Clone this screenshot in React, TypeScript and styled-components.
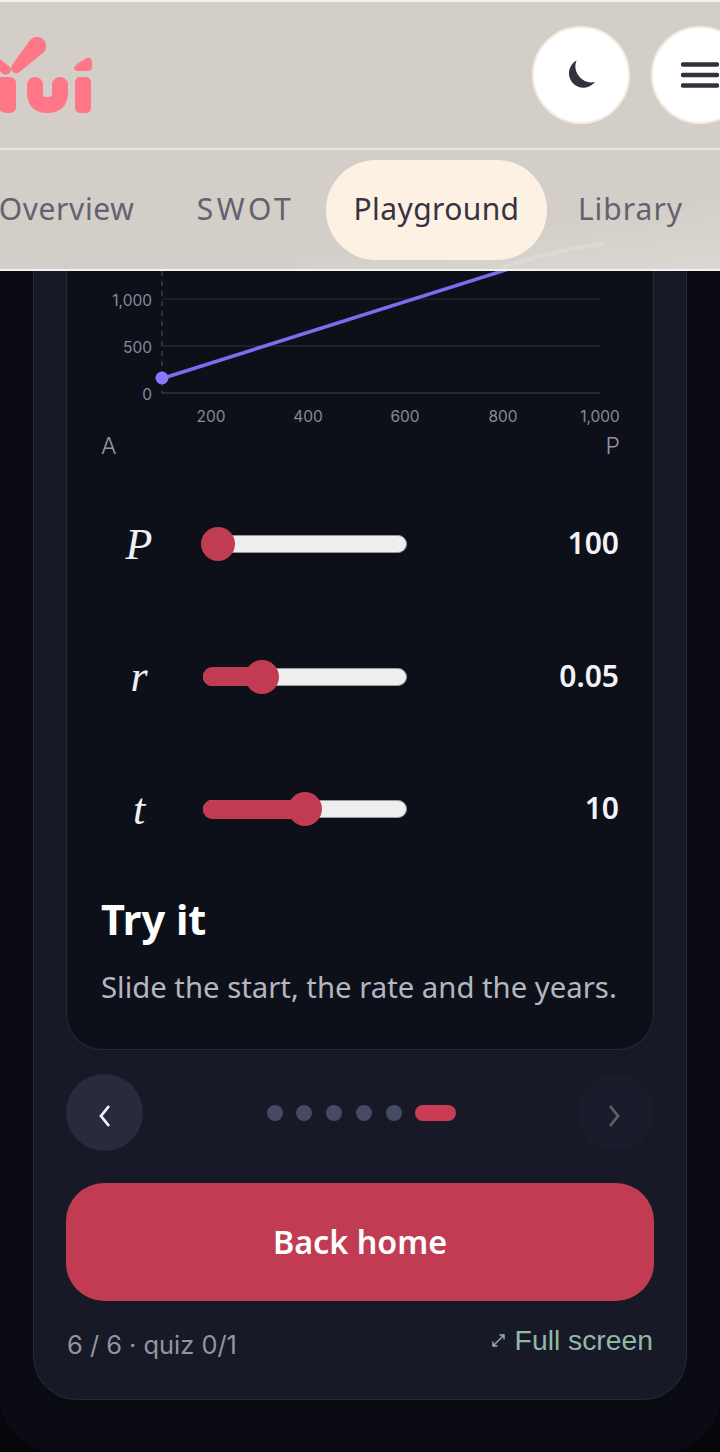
import React from "react";
import styled, { createGlobalStyle } from "styled-components";

const Global = createGlobalStyle`
  html, body { margin: 0; padding: 0; background: #07070b; }
  body { font-family: "Open Sans", "Noto Sans", sans-serif; }
  * { box-sizing: border-box; }
`;

const Page = styled.div`
  width: 720px;
  height: 1452px;
  overflow: hidden;
  position: relative;
  background: #07070b;
`;
const Shell = styled.div`
  width: 720px;
  height: 1452px;
  background: #0b0c13;
  border-radius: 0 0 56px 56px;
  display: flex;
  flex-direction: column;
`;
const Header = styled.header`
  height: 271px;
  flex: none;
  overflow: hidden;
  position: relative;
  background: linear-gradient(172deg, #d3cfc8 80%, #dbd8d1 100%);
  border-top: 2px solid #f2f0ec;
  border-bottom: 2px solid #f4f2ee;
`;
const TopBar = styled.div`
  height: 148px;
  display: flex;
  align-items: center;
  border-bottom: 2px solid #ece6d8;
`;
const Logo = styled.svg`
  width: 100px;
  height: 120px;
  flex: none;
  align-self: flex-start;
  margin-top: 26px;
`;
const Actions = styled.div`
  margin-left: auto;
  display: flex;
  gap: 21px;
  margin-right: -29px;
`;
const RoundButton = styled.div`
  width: 98px;
  height: 98px;
  flex: none;
  border-radius: 50%;
  background: #fff;
  border: 2px solid #f3ecdf;
  display: flex;
  align-items: center;
  justify-content: center;
`;
const MenuIcon = styled.svg`
  width: 38px;
  height: 26px;
  margin-left: -1px;
`;
const Tabs = styled.nav`
  height: 119px;
  display: flex;
  align-items: flex-start;
  padding-top: 10px;
  margin-left: -27px;
`;
const Tab = styled.div<{ $active?: boolean; $width: number; $spacing?: number; $inset?: number }>`
  width: ${(p) => p.$width}px;
  height: 100px;
  flex: none;
  padding: 0 0 4px ${(p) => p.$inset ?? 0}px;
  border-radius: 50px;
  display: flex;
  align-items: center;
  justify-content: center;
  font-size: 30px;
  font-family: "Noto Sans", sans-serif;
  letter-spacing: ${(p) => p.$spacing ?? 0.4}px;
  color: ${(p) => (p.$active ? "#35333f" : "#64626f")};
  background: ${(p) => (p.$active ? "#fdf1e3" : "transparent")};
`;
const Streak = styled.svg`
  position: absolute;
  left: 500px;
  bottom: 0;
  width: 110px;
  height: 28px;
  filter: blur(1px);
`;
const Panel = styled.main`
  margin: 0 33px;
  height: 1129px;
  flex: none;
  background: #171926;
  border: 1.5px solid #272a39;
  border-top: 0;
  border-radius: 0 0 44px 44px;
  padding: 0 33px;
  display: flex;
  flex-direction: column;
`;
const Card = styled.section`
  height: 779px;
  flex: none;
  margin: 0 -1px;
  background: #0e1019;
  border: 1.5px solid #272a39;
  border-top: 0;
  border-radius: 0 0 36px 36px;
  padding: 0 34px;
  display: flex;
  flex-direction: column;
`;
const Chart = styled.svg`
  width: 520px;
  height: 160px;
  flex: none;
  display: block;
  text {
    font-family: Inter, sans-serif;
    font-size: 15.5px;
    fill: #888a94;
  }
`;
const AxisNames = styled.div`
  height: 47px;
  flex: none;
  display: flex;
  justify-content: space-between;
  font-family: Inter, sans-serif;
  font-weight: 300;
  font-size: 23px;
  line-height: 30px;
  color: #9496a0;
  width: 519px;
`;
const SliderRow = styled.div`
  height: 132.5px;
  flex: none;
  display: flex;
  align-items: center;
`;
const MathLabel = styled.i`
  width: 76px;
  flex: none;
  text-align: center;
  font-family: "Liberation Serif", serif;
  font-size: 44px;
  color: #eef0f6;
`;
const Track = styled.div`
  width: 204px;
  height: 18px;
  margin-left: 26px;
  flex: none;
  position: relative;
  background: #eeeeee;
  border: 1.5px solid #9a9a9e;
  border-radius: 9px;
`;
const Fill = styled.div`
  position: absolute;
  left: -1.5px;
  top: -1.5px;
  bottom: -1.5px;
  background: #c13b52;
  border-radius: 9px 0 0 9px;
`;
const Thumb = styled.div`
  position: absolute;
  top: 50%;
  width: 34px;
  height: 34px;
  margin: -17px 0 0 -17px;
  border-radius: 50%;
  background: #c13b52;
`;
const Value = styled.div`
  margin-left: auto;
  width: 100px;
  padding-bottom: 3px;
  text-align: right;
  font-family: "Noto Sans", sans-serif;
  font-weight: 600;
  font-size: 30px;
  color: #f2f3f7;
`;
const Title = styled.h2`
  margin: 18px 0 0;
  font-family: "Noto Sans", sans-serif;
  font-weight: 700;
  font-size: 41.500px;
  line-height: 50px;
  color: #fff;
`;
const Desc = styled.p`
  margin: 24px 0 0;
  font-family: "Noto Sans", sans-serif;
  font-size: 29.3px;
  line-height: 38px;
  color: #b4b6c0;
  white-space: nowrap;
`;
const Pager = styled.div`
  height: 77px;
  flex: none;
  margin: 24px -1px 0;
  display: flex;
  align-items: center;
  justify-content: space-between;
`;
const NavButton = styled.div<{ $dim?: boolean }>`
  width: 77px;
  height: 77px;
  border-radius: 50%;
  background: ${(p) => (p.$dim ? "#1a1c2b" : "#272b3d")};
  display: flex;
  align-items: center;
  justify-content: center;
  padding-top: 6px;
`;
const Dots = styled.div`
  display: flex;
  align-items: center;
  gap: 13.7px;
  margin-left: 3px;
`;
const Dot = styled.span<{ $active?: boolean }>`
  width: ${(p) => (p.$active ? "41px" : "16px")};
  height: 16px;
  border-radius: 8px;
  background: ${(p) => (p.$active ? "#c93c54" : "#464a64")};
`;
const Primary = styled.div`
  height: 118px;
  flex: none;
  margin: 32px -1px 0;
  border-radius: 38px;
  background: #c13b52;
  color: #fff;
  display: flex;
  align-items: center;
  justify-content: center;
  padding-bottom: 2px;
  font-family: "Noto Sans", sans-serif;
  font-weight: 600;
  font-size: 32.3px;
`;
const Footer = styled.div`
  display: flex;
  justify-content: space-between;
  align-items: flex-start;
  margin-top: 21px;
`;
const Count = styled.div`
  font-family: Inter, sans-serif;
  font-size: 25.4px;
  line-height: 44px;
  color: #93959f;
  margin-top: 1px;
`;
const FullScreen = styled.div`
  display: flex;
  align-items: center;
  font-family: "Liberation Sans", sans-serif;
  font-size: 28.3px;
  line-height: 36px;
  color: #8fb8a9;
  gap: 9px;
`;

const xTicks = [
  [211, "200"],
  [308, "400"],
  [405, "600"],
  [503, "800"],
  [600, "1,000"],
] as const;
const yTicks = [
  [299, "1,000", "#1e2130"],
  [346, "500", "#232635"],
  [393, "0", "#30333f"],
] as const;
const sliders = [
  { name: "P", value: "100", frac: 0 },
  { name: "r", value: "0.05", frac: 0.253 },
  { name: "t", value: "10", frac: 0.5 },
];

export default function App() {
  const X0 = 101;
  const Y0 = 271;
  return (
    <Page>
      <Global />
      <Shell>
        <Header>
          <TopBar>
            <Logo viewBox="0 28 100 120" aria-label="logo" role="img">
              <g fill="#ff7686">
                <path d="M30.500 39.500A8.800 8.800 0 0 1 43.500 52.500L20 71.500A5 5 0 0 1 12.500 64.500Z" />
                <path d="M-4 56l14 11c2 2 1 6-2 7-2 1-4 1-6-1L-6 66z" />
                <path d="M-2 77h10c5 0 8 2 8 6v24c0 4-3 6-8 6s-10-2-10-6z" />
                <path d="M75 66c3-3 8-6 12-8 3-1 5 1 5 4v5c0 3-2 4-4 4H78c-3 0-5-2-3-5z" />
                <rect x="75" y="77" width="16" height="36" rx="5" />
              </g>
              <path d="M35 85v8c0 8 4 12 12.500 12S60 101 60 93V85" fill="none" stroke="#ff7686" strokeWidth="16" strokeLinecap="round" />
            </Logo>
            <Actions>
              <RoundButton>
                <svg width="30" height="30" viewBox="0 0 30 30" fill="#33313e">
                  <path d="M10.500 0.500A14.500 14.500 0 1 0 29 22 16.200 16.200 0 0 1 10.500 0.500Z" />
                </svg>
              </RoundButton>
              <RoundButton>
                <MenuIcon viewBox="0 0 38 26" fill="none" stroke="#33313e" strokeWidth="4.500" strokeLinecap="round">
                  <path d="M2 2.500h34M2 13h34M2 23.500h34" />
                </MenuIcon>
              </RoundButton>
            </Actions>
          </TopBar>
          <Tabs>
            <Tab $width={187} $spacing={0.6}>Overview</Tab>
            <Tab $width={166} $spacing={3.6} $inset={5}>SWOT</Tab>
            <Tab $width={221} $active>Playground</Tab>
            <Tab $width={167} $spacing={1}>Library</Tab>
          </Tabs>
          <Streak viewBox="0 0 110 28" fill="none">
            <path d="M2 26C25 20 50 10 105 2" stroke="#ecebe8" strokeOpacity=".4" strokeWidth="3" />
          </Streak>
        </Header>
        <Panel>
          <Card>
            <Chart viewBox={`${X0} ${Y0} 520 160`}>
              {yTicks.map(([y, label, color]) => (
                <g key={label}>
                  <line x1="162" x2="600" y1={y} y2={y} stroke={color} strokeWidth="1.500" />
                  <text x="152" y={y + 7} textAnchor="end">{label}</text>
                </g>
              ))}
              <line x1="162" x2="162" y1="271" y2="393" stroke="#3b3e4b" strokeWidth="1.500" strokeDasharray="5 5" />
              {xTicks.map(([x, label]) => (
                <text key={label} x={x} y="422" textAnchor="middle">{label}</text>
              ))}
              <line x1="162" y1="378.500" x2="515" y2="267" stroke="#7d6cf0" strokeWidth="3.500" />
              <circle cx="162" cy="378" r="6.500" fill="#8a78ff" />
            </Chart>
            <AxisNames>
              <span>A</span>
              <span>P</span>
            </AxisNames>
            {sliders.map((s) => (
              <SliderRow key={s.name}>
                <MathLabel>{s.name}</MathLabel>
                <Track>
                  <Fill style={{ width: s.frac === 0 ? 0 : 15 + s.frac * 174 }} />
                  <Thumb style={{ left: 13.5 + s.frac * 174 }} />
                </Track>
                <Value>{s.value}</Value>
              </SliderRow>
            ))}
            <Title>Try it</Title>
            <Desc>Slide the start, the rate and the years.</Desc>
          </Card>
          <Pager>
            <NavButton>
              <svg width="14" height="22" viewBox="0 0 14 22" fill="none" stroke="#f2f3f7" strokeWidth="2.800">
                <path d="M11 1L3 11l8 10" />
              </svg>
            </NavButton>
            <Dots>
              <Dot /><Dot /><Dot /><Dot /><Dot /><Dot $active />
            </Dots>
            <NavButton $dim>
              <svg width="14" height="22" viewBox="0 0 14 22" fill="none" stroke="#5e606c" strokeWidth="2.800" style={{ marginLeft: -3 }}>
                <path d="M3 1l8 10-8 10" />
              </svg>
            </NavButton>
          </Pager>
          <Primary>Back home</Primary>
          <Footer>
            <Count>6 / 6 · quiz 0/1</Count>
            <FullScreen>
              <svg width="15" height="15" viewBox="0 0 15 15" fill="none" stroke="#8fb8a9" strokeWidth="1.400">
                <path d="M2 13L13 2M8.500 2H13v4.500M2 8.500V13h4.500" />
              </svg>
              Full screen
            </FullScreen>
          </Footer>
        </Panel>
      </Shell>
    </Page>
  );
}
